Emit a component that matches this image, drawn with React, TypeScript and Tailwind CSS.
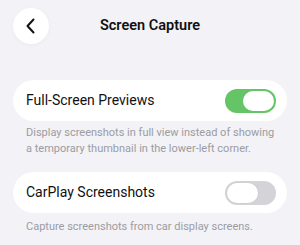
import React, { useState } from 'react';

const Toggle = ({ on, onChange }: { on: boolean; onChange: () => void }) => (
    <button
        onClick={onChange}
        className={`flex items-center w-[51px] h-[24px] rounded-full p-[2px] ${on ? 'bg-[#65c466] justify-end' : 'bg-[#d4d4d8] justify-start'}`}
    >
        <span className={`block w-[31px] h-[20px] rounded-full bg-white ${on ? '' : 'ring-1 ring-[#d0d0d4]'}`} />
    </button>
);

const SettingRow = ({ label, desc, on, onChange, descGap }: { label: string; desc: string; on: boolean; onChange: () => void; descGap: string }) => (
    <div>
        <div className="flex items-center justify-between h-[41px] rounded-full bg-white pl-[13px] pr-[11px]">
            <span className="text-[14px] text-[#111]">{label}</span>
            <Toggle on={on} onChange={onChange} />
        </div>
        <p className={`${descGap} pl-[13px] pr-[12px] text-[11px] leading-[16px] text-[#9c9ca1]`}>{desc}</p>
    </div>
);

export default function App() {
    const [fullScreen, setFullScreen] = useState(true);
    const [carPlay, setCarPlay] = useState(false);

    return (
        <div className="w-[300px] h-[245px] overflow-hidden bg-[#f2f2f7] px-[13px] pt-[8px]" style={{ fontFamily: 'Roboto, "Noto Sans", sans-serif' }}>
            <div className="flex items-center h-[36px]">
                <button className="flex items-center justify-center w-[36px] h-[36px] rounded-full bg-white shadow-[0_1px_4px_rgba(0,0,0,0.04)]">
                    <svg width="12" height="16" viewBox="0 0 12 16" fill="none">
                        <path d="M8.5 1.5 L2.5 8 L8.5 14.5" stroke="#111" strokeWidth="2" strokeLinecap="round" strokeLinejoin="round" />
                    </svg>
                </button>
                <h1 className="flex-1 text-center text-[14.5px] font-semibold text-[#111]">Screen Capture</h1>
                <div className="w-[36px]" />
            </div>

            <div className="mt-[36px] flex flex-col gap-[15px]">
                <SettingRow
                    label="Full-Screen Previews"
                    desc="Display screenshots in full view instead of showing a temporary thumbnail in the lower-left corner."
                    on={fullScreen}
                    onChange={() => setFullScreen(!fullScreen)}
                    descGap="mt-[4px]"
                />
                <SettingRow
                    label="CarPlay Screenshots"
                    desc="Capture screenshots from car display screens."
                    on={carPlay}
                    onChange={() => setCarPlay(!carPlay)}
                    descGap="mt-[6px]"
                />
            </div>
        </div>
    );
}
